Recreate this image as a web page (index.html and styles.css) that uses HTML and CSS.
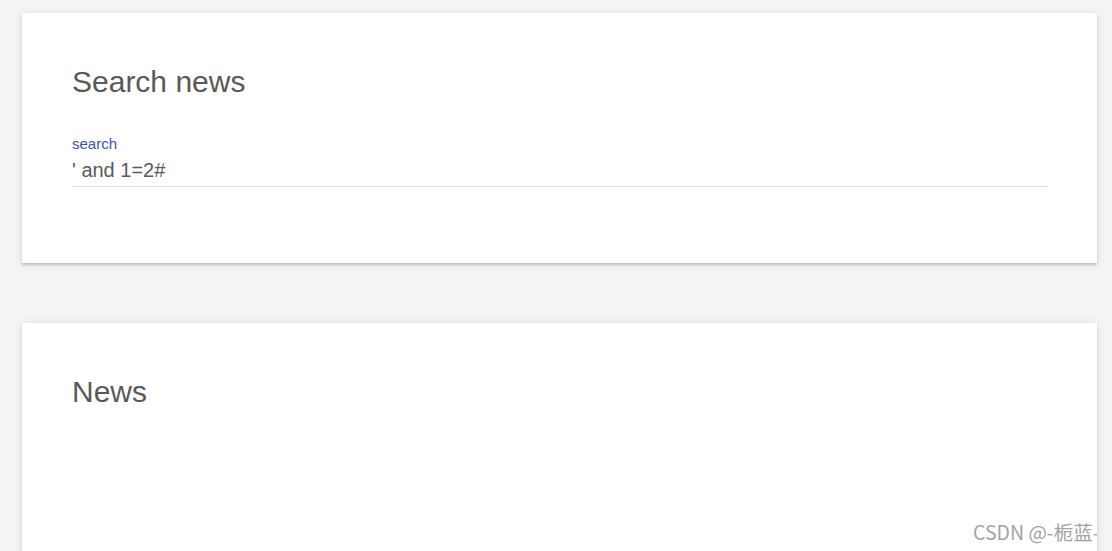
FILE: index.html
```html
<!DOCTYPE html>
<html lang="en">
<head>
<meta charset="utf-8">
<title>Search news</title>
<link rel="stylesheet" href="styles.css">
</head>
<body>
<main class="page">
  <section class="card card-search">
    <h1 class="card-title">Search news</h1>
    <div class="field">
      <label class="field-label" for="q">search</label>
      <input class="field-input" id="q" type="text" value="' and 1=2#">
    </div>
  </section>
  <section class="card card-news">
    <h1 class="card-title">News</h1>
    <div class="watermark">CSDN @-栀蓝-</div>
  </section>
</main>
</body>
</html>
```

FILE: styles.css
```css
html, body {
  margin: 0;
  padding: 0;
  background: #f4f4f4;
  overflow: hidden;
}

.page {
  display: flex;
  flex-direction: column;
  gap: 60px;
  padding: 13px 15px 0 22px;
  font-family: "Liberation Sans", Arial, sans-serif;
}

.card {
  background: #fff;
  box-shadow: 0 2px 2px 0 rgba(0, 0, 0, 0.16), 0 1px 8px 0 rgba(0, 0, 0, 0.10);
  padding: 51px 50px 76px 50px;
}

.card-title {
  margin: 0;
  font-size: 30px;
  line-height: 36px;
  font-weight: 400;
  color: #595959;
}

.field {
  display: flex;
  flex-direction: column;
  margin-top: 35px;
}

.field-label {
  font-size: 15px;
  line-height: 18px;
  color: #3f51b5;
}

.field-input {
  margin: 5px 0 0 0;
  padding: 0 0 4px 0;
  border: none;
  border-bottom: 1px solid #ddd;
  outline: none;
  font-family: "Liberation Sans", Arial, sans-serif;
  font-size: 20px;
  line-height: 24px;
  height: 24px;
  box-sizing: content-box;
  color: #595959;
  background: transparent;
}

.card-news {
  position: relative;
  overflow: hidden;
  height: 150px;
}

.watermark {
  position: absolute;
  left: 951px;
  top: 199px;
  white-space: nowrap;
  font-family: "Noto Sans CJK SC", "Noto Sans", sans-serif;
  font-size: 19.5px;
  line-height: 20px;
  color: #a3a3a3;
}
```
